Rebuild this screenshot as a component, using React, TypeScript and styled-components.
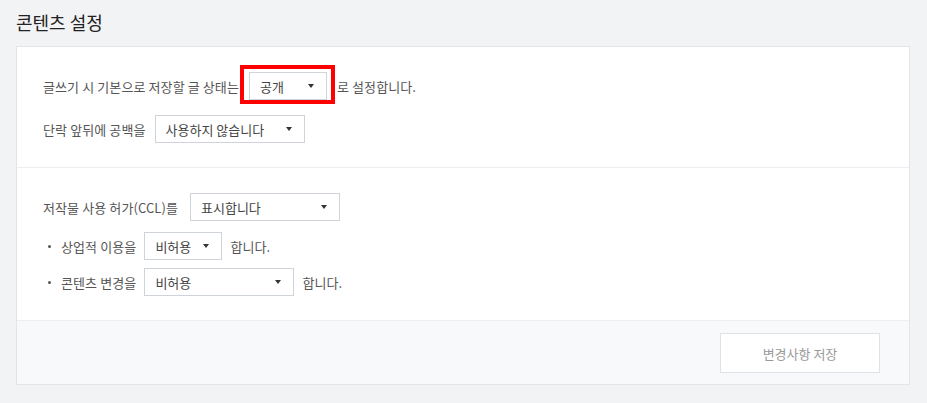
import React from "react";
import styled, { createGlobalStyle } from "styled-components";

const Global = createGlobalStyle`
  html, body { margin: 0; padding: 0; background: #f2f3f5; }
  body { font-family: "Noto Sans CJK KR", "Noto Sans", sans-serif; }
  * { box-sizing: border-box; }
`;

const Page = styled.div`
  padding: 0 17px 0 16px;
  height: 403px;
`;

const Title = styled.h2`
  margin: 0;
  height: 46px;
  display: flex;
  align-items: center;
  padding-bottom: 2px;
  font-size: 18px;
  font-weight: 400;
  color: #222;
`;

const Panel = styled.section`
  background: #fff;
  border: 1px solid #e1e4e8;
`;

const Section = styled.div<{ $gap: number }>`
  display: flex;
  flex-direction: column;
  gap: ${(p) => p.$gap}px;
  padding: 25px 26px 24px;
  border-bottom: 1px solid #eceef1;
`;

const List = styled.ul`
  list-style: none;
  margin: 0;
  padding: 0;
  display: flex;
  flex-direction: column;
  gap: 8px;
`;

const Row = styled.div<{ $gap?: number }>`
  display: flex;
  align-items: center;
  gap: ${(p) => p.$gap ?? 9}px;
  height: 28px;
  font-size: 13px;
  letter-spacing: 0.1px;
  color: #555;
`;

const Item = styled.li`
  position: relative;
  display: flex;
  align-items: center;
  gap: 8px;
  height: 28px;
  padding-left: 18px;
  font-size: 13px;
  letter-spacing: 0.1px;
  color: #555;
  &::before {
    content: "";
    position: absolute;
    left: 5px;
    top: 13px;
    width: 3px;
    height: 3px;
    border-radius: 50%;
    background: #555;
  }
`;

const Select = styled.div<{ $w: number }>`
  position: relative;
  display: flex;
  align-items: center;
  justify-content: space-between;
  width: ${(p) => p.$w}px;
  height: 28px;
  padding: 0 12px 0 10px;
  border: 1px solid #cfd3da;
  background: #fff;
  color: #444;
  font-size: 13px;
  letter-spacing: 0;
  cursor: pointer;
`;

const Caret = styled.span`
  width: 0;
  height: 0;
  border-left: 3.5px solid transparent;
  border-right: 3.5px solid transparent;
  border-top: 4px solid #333;
`;

const Highlight = styled.span`
  position: absolute;
  left: -10px;
  right: -9px;
  top: -8px;
  bottom: -5px;
  border: 4px solid #ff0000;
  pointer-events: none;
`;

const Footer = styled.div`
  display: flex;
  justify-content: flex-end;
  padding: 12px 29px 11px;
  background: #f8f9fb;
`;

const SaveButton = styled.button`
  width: 160px;
  height: 40px;
  border: 1px solid #dfe3e8;
  background: #fff;
  color: #999;
  font-family: inherit;
  font-size: 13px;
  cursor: pointer;
`;

function Dropdown({ w, label, highlight }: { w: number; label: string; highlight?: boolean }) {
  return (
    <Select $w={w}>
      <span>{label}</span>
      <Caret />
      {highlight && <Highlight />}
    </Select>
  );
}

export default function App() {
  return (
    <>
      <Global />
      <Page>
        <Title>콘텐츠 설정</Title>
        <Panel>
          <Section $gap={15}>
            <Row $gap={10}>
              <span>글쓰기 시 기본으로 저장할 글 상태는</span>
              <Dropdown w={78} label="공개" highlight />
              <span>로 설정합니다.</span>
            </Row>
            <Row>
              <span>단락 앞뒤에 공백을</span>
              <Dropdown w={150} label="사용하지 않습니다" />
            </Row>
          </Section>
          <Section $gap={11}>
            <Row $gap={12}>
              <span>저작물 사용 허가(CCL)를</span>
              <Dropdown w={150} label="표시합니다" />
            </Row>
            <List>
              <Item>
                <span>상업적 이용을</span>
                <Dropdown w={78} label="비허용" />
                <span>합니다.</span>
              </Item>
              <Item>
                <span>콘텐츠 변경을</span>
                <Dropdown w={150} label="비허용" />
                <span>합니다.</span>
              </Item>
            </List>
          </Section>
          <Footer>
            <SaveButton type="button">변경사항 저장</SaveButton>
          </Footer>
        </Panel>
      </Page>
    </>
  );
}
